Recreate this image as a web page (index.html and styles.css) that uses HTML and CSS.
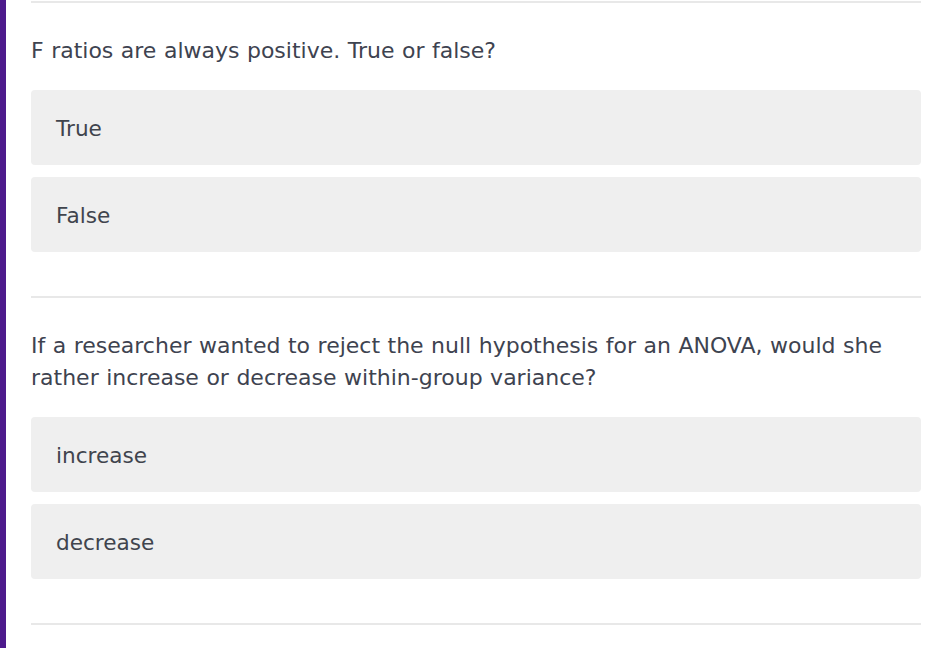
FILE: index.html
```html
<!DOCTYPE html>
<html lang="en">
<head>
<meta charset="utf-8">
<title>Quiz</title>
<link rel="stylesheet" href="styles.css">
</head>
<body>
<main class="page">
  <div class="content">
    <hr class="divider">
    <section class="question">
      <p class="prompt">F ratios are always positive. True or false?</p>
      <div class="options">
        <div class="option">True</div>
        <div class="option">False</div>
      </div>
    </section>
    <hr class="divider">
    <section class="question">
      <p class="prompt">If a researcher wanted to reject the null hypothesis for an ANOVA, would she rather increase or decrease within-group variance?</p>
      <div class="options">
        <div class="option">increase</div>
        <div class="option">decrease</div>
      </div>
    </section>
    <hr class="divider">
  </div>
</main>
</body>
</html>
```

FILE: styles.css
```css
html, body {
  margin: 0;
  padding: 0;
  background: #ffffff;
}

body {
  font-family: "DejaVu Sans", Verdana, sans-serif;
  color: #3e4350;
}

.page {
  display: flex;
  min-height: 648px;
  border-left: 6px solid #4d1a8c;
  box-sizing: border-box;
  padding: 1px 19px 0 25px;
}

.content {
  flex: 1;
  display: flex;
  flex-direction: column;
}

.divider {
  margin: 0;
  border: 0;
  height: 2px;
  background: #e8e8e8;
}

.question {
  padding: 32px 0 44px;
  display: flex;
  flex-direction: column;
  gap: 23px;
}

.prompt {
  margin: 0;
  font-size: 22px;
  line-height: 32px;
  word-spacing: 0.5px;
}

.options {
  display: flex;
  flex-direction: column;
  gap: 12px;
}

.option {
  background: #efefef;
  border-radius: 4px;
  height: 75px;
  box-sizing: border-box;
  padding: 2px 0 0 25px;
  display: flex;
  align-items: center;
  font-size: 21.6px;
  color: #40444d;
}
```
